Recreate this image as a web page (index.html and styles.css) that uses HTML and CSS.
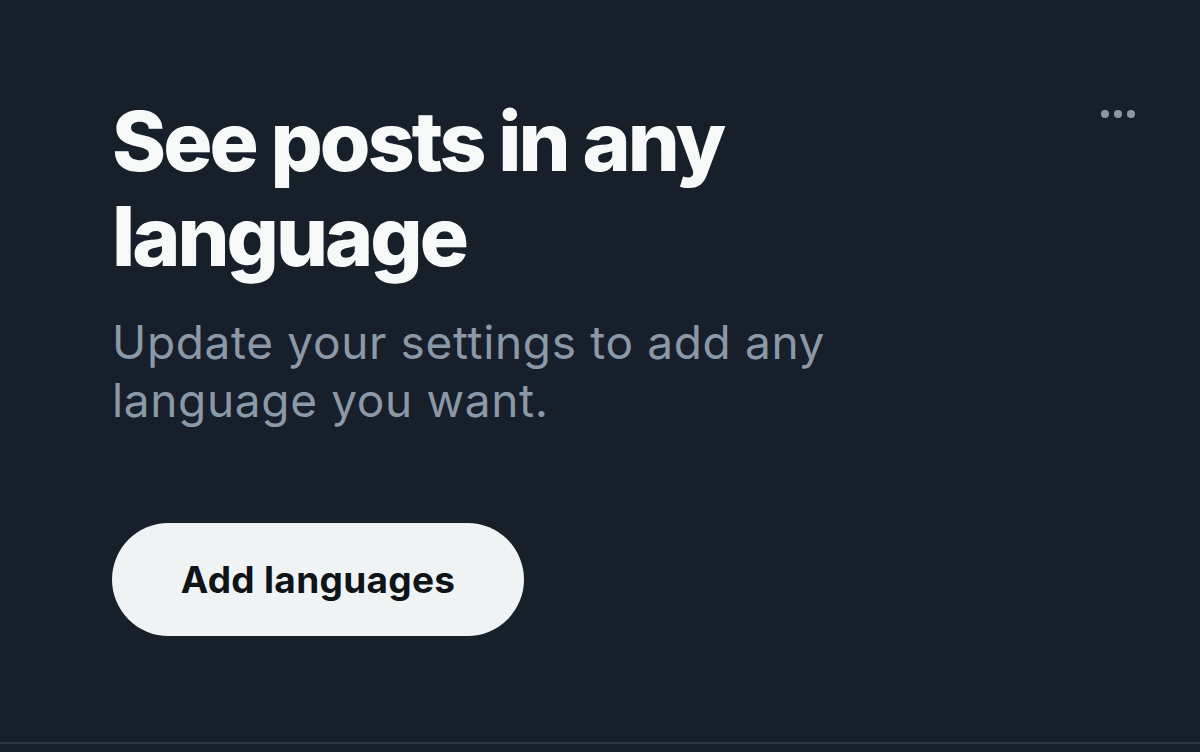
FILE: index.html
```html
<!doctype html>
<html lang="en">
  <head>
    <meta charset="UTF-8" />
    <meta name="viewport" content="width=device-width, initial-scale=1.0" />
    <title>See posts in any language</title>
    <link rel="stylesheet" href="styles.css">
  </head>
  <body>
    <section class="card">
      <div class="content">
        <h1>See posts in any language</h1>
        <p class="sub">Update your settings to add any language you want.</p>
        <button class="btn" type="button">Add languages</button>
      </div>
      <button class="more" type="button" aria-label="More">
        <svg viewBox="0 0 40 12" width="40" height="12">
          <circle cx="7" cy="6" r="4" />
          <circle cx="20" cy="6" r="4" />
          <circle cx="33" cy="6" r="4" />
        </svg>
      </button>
    </section>
  </body>
</html>
```

FILE: styles.css
```css
* {
  box-sizing: border-box;
}

html,
body {
  margin: 0;
  height: 100%;
}

body {
  background: #161f2a;
  font-family: Inter, "Noto Sans", "Liberation Sans", sans-serif;
  color: #f7f9f9;
}

.card {
  height: 744px;
  display: flex;
  justify-content: space-between;
  padding: 94px 62px 0 112px;
  border-bottom: 2px solid #2f3741;
}

.content {
  display: flex;
  flex-direction: column;
  max-width: 760px;
}

h1 {
  margin: 0;
  font-size: 82px;
  font-weight: 800;
  line-height: 95px;
  letter-spacing: -3px;
}

.sub {
  margin: 29px 0 0;
  font-size: 46px;
  line-height: 58px;
  letter-spacing: 0.65px;
  color: #8b98a5;
  font-weight: 400;
}

.btn {
  align-self: flex-start;
  margin-top: 94px;
  width: 412px;
  height: 113px;
  border: none;
  border-radius: 57px;
  background: #eff3f4;
  color: #0f1419;
  font-family: inherit;
  font-size: 37px;
  font-weight: 700;
  letter-spacing: 0.3px;
}

.more {
  align-self: flex-start;
  background: none;
  border: none;
  padding: 0;
  margin-top: 14px;
}

.more svg {
  display: block;
  fill: #8b98a5;
}
```
